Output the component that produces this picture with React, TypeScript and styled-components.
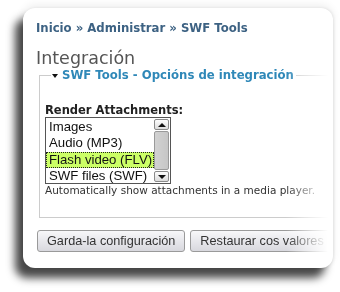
import React from 'react';
import styled, { createGlobalStyle } from 'styled-components';

const GlobalStyle = createGlobalStyle`
  html, body {
    margin: 0;
    padding: 0;
    background: #ffffff;
  }
`;

const Stage = styled.div`
  width: 340px;
  height: 292px;
  padding: 8px 0 0 23px;
  box-sizing: border-box;
  overflow: hidden;
`;

const Card = styled.div`
  width: 310px;
  height: 260px;
  box-sizing: border-box;
  background: #ffffff;
  border-radius: 12px;
  box-shadow: -8px 10px 9px rgba(0, 0, 0, 0.72), 0 -3px 9px rgba(0, 0, 0, 0.07),
    1px 0 3px rgba(0, 0, 0, 0.08);
  padding: 13px 0 0 13px;
`;

const Content = styled.div`
  width: 297px;
  overflow: hidden;
  -webkit-mask-image: linear-gradient(
    to right,
    #000 250px,
    rgba(0, 0, 0, 0.45) 272px,
    transparent 292px
  );
  mask-image: linear-gradient(
    to right,
    #000 250px,
    rgba(0, 0, 0, 0.45) 272px,
    transparent 292px
  );
`;

const Breadcrumb = styled.div`
  font-family: 'DejaVu Sans', sans-serif;
  font-weight: bold;
  font-size: 11.7px;
  line-height: 14px;
  color: #3d6283;
  white-space: nowrap;
`;

const Heading = styled.h2`
  margin: 13px 0 0 0;
  font-family: 'DejaVu Sans', sans-serif;
  font-weight: normal;
  font-size: 17.5px;
  line-height: 20px;
  color: #555555;
`;

const Fieldset = styled.fieldset`
  margin: 0 0 0 3px;
  width: 320px;
  padding: 0 5px 20px 5px;
  border: 1px solid #cccccc;
`;

const Legend = styled.legend`
  margin-left: 6px;
  padding: 0 2px 0 1px;
  display: flex;
  align-items: center;
  gap: 4px;
  font-family: 'DejaVu Sans', sans-serif;
  font-weight: bold;
  font-size: 11.7px;
  line-height: 14px;
  color: #2f88b8;
  white-space: nowrap;
`;

const Caret = styled.span`
  width: 0;
  height: 0;
  border-left: 3.5px solid transparent;
  border-right: 3.5px solid transparent;
  border-top: 4px solid #111111;
  margin-top: 1px;
`;

const Label = styled.div`
  margin-top: 21px;
  font-family: 'DejaVu Sans', sans-serif;
  font-weight: bold;
  font-size: 11.5px;
  line-height: 14px;
  color: #222222;
`;

const ListBox = styled.div`
  width: 126px;
  height: 67px;
  box-sizing: border-box;
  border: 1px solid #555555;
  display: flex;
  background: #ffffff;
`;

const Options = styled.div`
  flex: 1;
  display: flex;
  flex-direction: column;
  padding-top: 0.5px;
`;

const Option = styled.div<{ $selected?: boolean }>`
  height: 16.5px;
  box-sizing: border-box;
  padding-left: ${(p) => (p.$selected ? '2px' : '3px')};
  font-family: 'Liberation Sans', Arial, sans-serif;
  font-size: 13.2px;
  line-height: ${(p) => (p.$selected ? '14.5px' : '16.5px')};
  color: #111111;
  white-space: nowrap;
  background: ${(p) => (p.$selected ? '#ccff66' : 'transparent')};
  border: ${(p) => (p.$selected ? '1px dotted #222' : 'none')};
`;

const Scrollbar = styled.div`
  width: 16px;
  display: flex;
  flex-direction: column;
  padding: 1px 1px 1px 0;
  box-sizing: border-box;
`;

const ScrollButton = styled.div`
  height: 11px;
  box-sizing: border-box;
  border: 1px solid #8a8a8a;
  border-radius: 2px;
  background: linear-gradient(#fdfdfd, #dcdcdc);
  display: flex;
  align-items: center;
  justify-content: center;
`;

const Track = styled.div`
  flex: 1;
  margin: 1px 0;
  box-sizing: border-box;
  border: 1px solid #9a9a9a;
  border-radius: 2px;
  background: linear-gradient(to right, #d2d2d2, #c6c6c6);
`;

const Arrow = styled.span<{ $down?: boolean }>`
  width: 0;
  height: 0;
  border-left: 4px solid transparent;
  border-right: 4px solid transparent;
  ${(p) =>
    p.$down ? 'border-top: 4px solid #111;' : 'border-bottom: 4px solid #111;'}
`;

const Description = styled.div`
  font-family: 'DejaVu Sans', sans-serif;
  font-size: 10.5px;
  line-height: 13px;
  color: #333333;
  white-space: nowrap;
`;

const Actions = styled.div`
  margin-top: 12px;
  margin-left: 1px;
  display: flex;
  gap: 5px;
`;

const Button = styled.button`
  height: 22px;
  padding: 0 9px;
  flex-shrink: 0;
  font-family: 'Liberation Sans', Arial, sans-serif;
  font-size: 12.7px;
  color: #333333;
  background: linear-gradient(#f7f7f9, #d8d8de);
  border: 1px solid #9a9a9a;
  border-radius: 3px;
  white-space: nowrap;
`;

function App() {
  return (
    <Stage>
      <GlobalStyle />
      <Card>
        <Content>
          <Breadcrumb>Inicio » Administrar » SWF Tools</Breadcrumb>
          <Heading>Integración</Heading>
          <Fieldset>
            <Legend>
              <Caret />
              SWF Tools - Opcións de integración
            </Legend>
            <Label>Render Attachments:</Label>
            <ListBox>
              <Options>
                <Option>Images</Option>
                <Option>Audio (MP3)</Option>
                <Option $selected>Flash video (FLV)</Option>
                <Option>SWF files (SWF)</Option>
              </Options>
              <Scrollbar>
                <ScrollButton>
                  <Arrow />
                </ScrollButton>
                <Track />
                <ScrollButton>
                  <Arrow $down />
                </ScrollButton>
              </Scrollbar>
            </ListBox>
            <Description>Automatically show attachments in a media player.</Description>
          </Fieldset>
          <Actions>
            <Button>Garda-la configuración</Button>
            <Button>Restaurar cos valores por defecto</Button>
          </Actions>
        </Content>
      </Card>
    </Stage>
  );
}

export default App;
